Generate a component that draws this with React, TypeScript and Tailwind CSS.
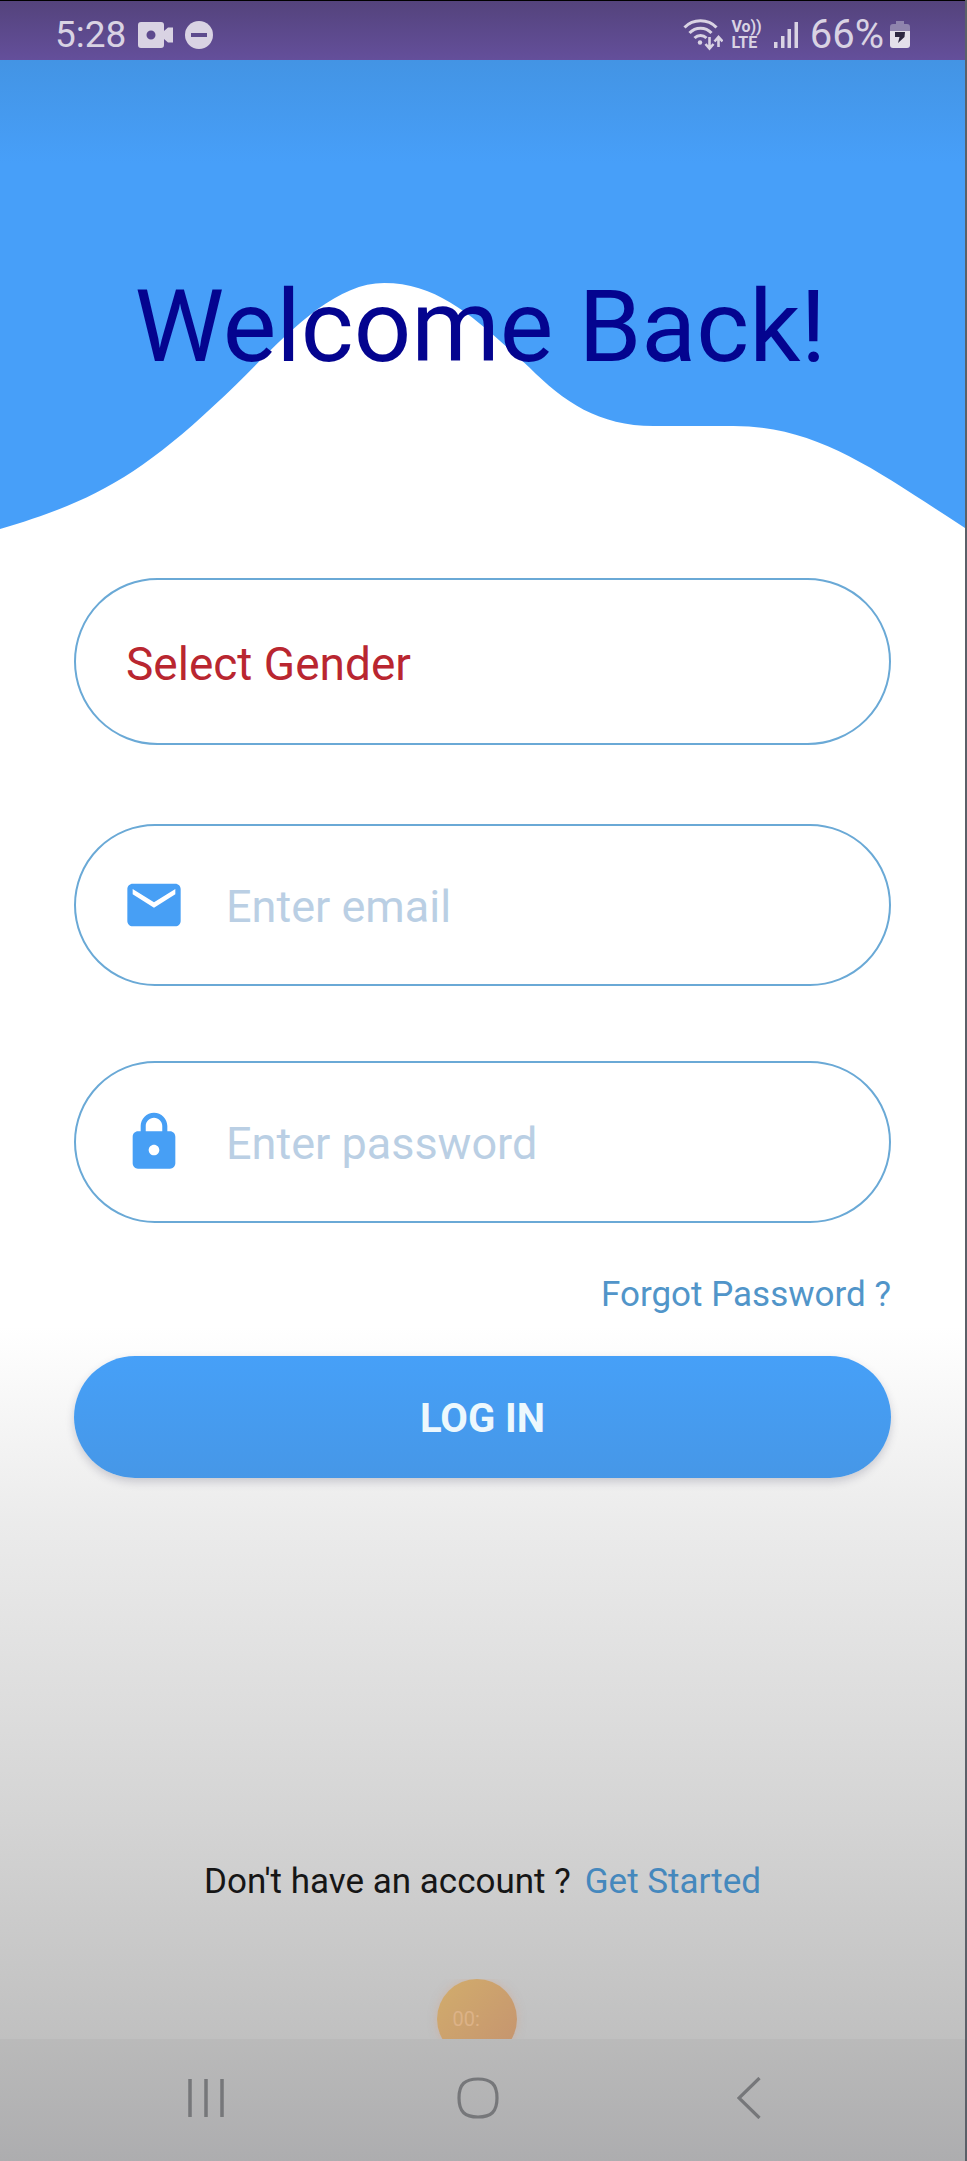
import React from "react";

const frame = "font-[Roboto,'Liberation_Sans',sans-serif]";
const fieldBox = "flex items-center rounded-full border-2 border-[#6aa9d6] bg-white";
const fieldInput =
  "min-w-0 flex-1 bg-transparent pt-1 text-[45px] leading-[56px] text-[#333333] placeholder:text-[#bacfe4] placeholder:opacity-100 outline-none";

function StatusBar() {
  return (
    <div className="flex h-[60px] items-center justify-between border-t border-black bg-linear-to-b from-[#54437c] to-[#644f9b] pr-[55px] pl-[55px] text-[#d9d3e3]">
      <div className="flex items-center gap-3 pt-2">
        <span className="text-[37px] leading-[40px]">5:28</span>
        <svg className="h-[26px] w-[35px]" viewBox="0 0 35 26" fill="currentColor" aria-hidden="true">
          <path
            fillRule="evenodd"
            d="M3 0H23a3 3 0 0 1 3 3V9l4-3.500h5V20.500H30l-4-3.500V23a3 3 0 0 1-3 3H3a3 3 0 0 1-3-3V3a3 3 0 0 1 3-3ZM13 8.500a4.500 4.500 0 1 0 0 9a4.500 4.500 0 1 0 0-9Z"
          />
        </svg>
        <svg className="h-7 w-7" viewBox="0 0 28 28" aria-hidden="true">
          <circle cx="14" cy="14" r="14" fill="currentColor" />
          <path d="M6 14H22" stroke="#5d4b8d" strokeWidth="4" />
        </svg>
      </div>
      <div className="flex items-center pt-2">
        <svg className="mr-2 h-8 w-10" viewBox="0 0 40 32" fill="none" stroke="currentColor" aria-hidden="true">
          <path d="M1.500 8.500C10 -0.500 25 -0.500 33.500 8.500" strokeWidth="3" />
          <path d="M6.500 14C12.500 7.500 22.500 7.500 28.500 14" strokeWidth="3" />
          <path d="M11.500 19C15 15.500 20 15.500 23.500 19" strokeWidth="3" />
          <circle cx="17" cy="23.500" r="2.200" fill="currentColor" stroke="none" />
          <path d="M26.500 18V28M22.500 25L26.500 29.500L30.500 25M35.500 28V19M31.500 22.500L35.500 18L39.500 22.500" strokeWidth="2.600" />
        </svg>
        <span className="mr-3 flex flex-col text-[16px] leading-[16px] font-bold">
          <span>Vo))</span>
          <span>LTE</span>
        </span>
        <svg className="mr-3 h-[26px] w-6" viewBox="0 0 24 26" fill="currentColor" aria-hidden="true">
          <path d="M0 20H3.500V26H0ZM7 14H10.500V26H7ZM13.500 7H17V26H13.500ZM20.500 0H24V26H20.500Z" />
        </svg>
        <span className="mr-[6px] text-[40px] leading-[40px]">66%</span>
        <svg className="h-[27px] w-5" viewBox="0 0 20 27" aria-hidden="true">
          <path d="M6 0H14V3H17a3 3 0 0 1 3 3V11H0V6a3 3 0 0 1 3-3H6Z" fill="#8f84ad" />
          <path d="M0 10H20V24a3 3 0 0 1-3 3H3a3 3 0 0 1-3-3Z" fill="#e4e0ea" />
          <path d="M5 11L15 11L14.500 16L8 22L9.500 16H5Z" fill="#2d2740" />
        </svg>
      </div>
    </div>
  );
}

function Hero() {
  return (
    <header className="relative h-[470px]">
      <svg className="absolute inset-0 h-full w-full" viewBox="0 0 967 470" preserveAspectRatio="none" aria-hidden="true">
        <defs>
          <linearGradient id="sky" x1="0" y1="0" x2="0" y2="1">
            <stop offset="0" stopColor="#4394e4" />
            <stop offset="0.22" stopColor="#479ff9" />
            <stop offset="1" stopColor="#479ff9" />
          </linearGradient>
        </defs>
        <path
          fill="url(#sky)"
          d="M0 0H967V468C880 412 820 366 735 366H655C600 366 565 342 530 307C480 262 442 223 385 223C325 223 270 295 215 345C135 420 85 444 0 469Z"
        />
      </svg>
      <h1 className="relative pt-[207px] pr-1 text-center text-[101px] leading-[120px] text-[#04048f]">Welcome Back!</h1>
    </header>
  );
}

function NavBar() {
  return (
    <nav
      aria-label="System"
      className="flex h-[122px] items-center justify-between bg-linear-to-b from-[#bababa] to-[#adadaf] pr-[194px] pb-1 pl-[184px] text-[#76777a]"
    >
      <button type="button" aria-label="Recent apps" className="flex w-11 justify-center">
        <svg className="h-10 w-10" viewBox="0 0 40 40" stroke="currentColor" strokeWidth="3.500" aria-hidden="true">
          <path d="M4 1V39M20 1V39M36 1V39" />
        </svg>
      </button>
      <button type="button" aria-label="Home">
        <svg className="h-[42px] w-[42px]" viewBox="0 0 42 42" fill="none" stroke="currentColor" strokeWidth="3.200" aria-hidden="true">
          <path d="M21 2C34 2 40 7 40 21S34 40 21 40S2 35 2 21S8 2 21 2Z" />
        </svg>
      </button>
      <button type="button" aria-label="Back" className="flex w-11 justify-center">
        <svg className="h-[42px] w-6" viewBox="0 0 24 42" fill="none" stroke="currentColor" strokeWidth="3.200" aria-hidden="true">
          <path d="M22.500 1L2 21L22.500 41" />
        </svg>
      </button>
    </nav>
  );
}

export default function App() {
  return (
    <div className={`${frame} flex min-h-screen flex-col border-r-2 border-[#5b6068] bg-white`}>
      <StatusBar />
      <div className="flex flex-1 flex-col bg-[linear-gradient(to_bottom,#ffffff_64%,#ebebeb_74%,#d4d4d4_89%,#c0c0c0_100%)]">
        <Hero />
        <form className="flex flex-col px-[74px] pt-12" onSubmit={(e) => e.preventDefault()}>
          <label className={`${fieldBox} h-[167px] px-[50px]`}>
            <select
              aria-label="Select Gender"
              defaultValue=""
              className="min-w-0 flex-1 appearance-none bg-transparent pt-1 text-[46px] leading-[56px] text-[#b92630] outline-none"
            >
              <option value="">Select Gender</option>
              <option value="female">Female</option>
              <option value="male">Male</option>
            </select>
          </label>

          <label className={`${fieldBox} mt-[79px] h-[162px] gap-10 px-[46px]`}>
            <svg className="h-16 w-16 shrink-0" viewBox="0 0 24 24" fill="#479ff5" role="img" aria-label="Email">
              <path d="M20 4H4c-1.100 0-1.990.9-1.990 2L2 18c0 1.100.9 2 2 2h16c1.100 0 2-.9 2-2V6c0-1.100-.9-2-2-2zm0 4l-8 5-8-5V6l8 5 8-5v2z" />
            </svg>
            <input type="email" placeholder="Enter email" className={fieldInput} />
          </label>

          <label className={`${fieldBox} mt-[75px] h-[162px] gap-10 px-[46px]`}>
            <svg className="h-16 w-16 shrink-0" viewBox="0 0 24 24" fill="#479ff5" role="img" aria-label="Password">
              <path d="M18 8h-1V6c0-2.760-2.240-5-5-5S7 3.240 7 6v2H6c-1.100 0-2 .9-2 2v10c0 1.100.9 2 2 2h12c1.100 0 2-.9 2-2V10c0-1.100-.9-2-2-2zm-6 9c-1.100 0-2-.9-2-2s.9-2 2-2 2 .9 2 2-.9 2-2 2zm3.100-9H8.900V6c0-1.710 1.390-3.100 3.100-3.100 1.710 0 3.100 1.390 3.100 3.100v2z" />
            </svg>
            <input type="password" placeholder="Enter password" className={fieldInput} />
          </label>

          <a href="#forgot" className="mt-[51px] self-end text-[35px] leading-[42px] text-[#5195c9]">
            Forgot Password ?
          </a>

          <button
            type="submit"
            className="mt-10 h-[122px] rounded-full bg-linear-to-b from-[#46a0f8] to-[#4697e7] pt-1 text-[40px] leading-[48px] font-bold text-[#edf8fd] shadow-[0_4px_8px_rgba(60,60,90,0.22)]"
          >
            LOG IN
          </button>
        </form>

        <p className="mt-auto flex justify-center gap-[14px] text-[35px] leading-[42px] text-[#161616]">
          Don't have an account ?
          <a href="#signup" className="text-[#4588bd]">
            Get Started
          </a>
        </p>
        <div className="mt-[76px] flex h-[60px] justify-center overflow-hidden">
          <div className="mr-3 h-20 w-20 shrink-0 rounded-full bg-linear-to-br from-[#d2ad6c] to-[#c4926f] pt-7 pl-4 text-[20px] leading-[24px] text-[#dcb287] shadow-[0_0_8px_rgba(215,165,140,0.5)]">
            00:
          </div>
        </div>
      </div>
      <NavBar />
    </div>
  );
}
